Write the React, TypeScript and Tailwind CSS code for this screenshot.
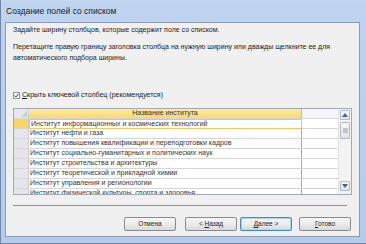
import React from 'react';

const rows = [
  'Институт информационных и космических технологий',
  'Институт нефти и газа',
  'Институт повышения квалификации и переподготовки кадров',
  'Институт социально-гуманитарных и политических наук',
  'Институт строительства и архитектуры',
  'Институт теоретической и прикладной химии',
  'Институт управления и регионологии',
  'Институт физической культуры, спорта и здоровья',
];

const Btn: React.FC<{ children: React.ReactNode; active?: boolean }> = ({ children, active }) => (
  <div
    className={`w-[52px] h-[14px] flex items-center justify-center rounded-[2px] border text-[6.5px] text-[#222] bg-gradient-to-b from-[#f6f6f6] via-[#ececec] to-[#d9d9d9] ${
      active ? 'border-[#3c8bd0] shadow-[inset_0_0_0_1px_#a9d6f5]' : 'border-[#8a8a8a]'
    }`}
  >
    <span className="whitespace-pre">{children}</span>
  </div>
);

const ScrollBtn: React.FC<{ up?: boolean }> = ({ up }) => (
  <div className="h-[10px] mx-px border border-[#b5b9c0] rounded-[1px] bg-gradient-to-b from-[#f7f7f7] to-[#e2e3e6] flex items-center justify-center">
    <svg width="6" height="4" viewBox="0 0 6 4">
      <path d={up ? 'M0 4 L3 0 L6 4 Z' : 'M0 0 L3 4 L6 0 Z'} fill="#4d6185" />
    </svg>
  </div>
);

export default function App() {
  return (
    <div className="w-[366px] h-[244px] flex flex-col bg-gradient-to-b from-[#bfd4f0] to-[#b4cbea] font-['Liberation_Sans',sans-serif] overflow-hidden border-l border-b border-[#6f86a8]">
      <div className="h-[22px] shrink-0 flex items-center pl-[5px] text-[8.5px] text-[#1b1b1b] border-t border-[#c3d7f0]">
        Создание полей со списком
      </div>
      <div className="flex-1 ml-[4px] mr-[6px] mb-[6px] border border-[#8d9cb3] bg-[#f0f0f0] flex flex-col px-[7px] text-[7px] text-[#1a1a1a]">
        <div className="mt-[1px] leading-[11px]">Задайте ширину столбцов, которые содержит поле со списком.</div>
        <div className="mt-[6px] leading-[11px]">
          Перетащите правую границу заголовка столбца на нужную ширину или дважды щелкните ее для
          <br />
          автоматического подбора ширины.
        </div>
        <div className="mt-[27px] h-[11px] flex items-center gap-[2px]">
          <div className="w-[7px] h-[7px] border border-[#8f8f8f] bg-white flex items-center justify-center">
            <svg width="5" height="5" viewBox="0 0 5 5">
              <path d="M0.5 2.5 L2 4 L4.5 0.8" stroke="#2a3f6e" strokeWidth="1" fill="none" />
            </svg>
          </div>
          <span>
            <span className="underline">С</span>крыть ключевой столбец (рекомендуется)
          </span>
        </div>
        <div className="mt-[7px] h-[87px] border border-[#a3a9b2] bg-white flex overflow-hidden">
          <div className="flex-1 flex flex-col">
            <div className="h-[10px] shrink-0 flex border-b border-[#d6d6d6]">
              <div className="w-[15px] bg-[#e6e9ee] border-r border-[#c8ccd2] relative">
                <svg className="absolute right-[1px] bottom-[1px]" width="6" height="6" viewBox="0 0 6 6">
                  <path d="M6 0 L6 6 L0 6 Z" fill="#c9ced6" />
                </svg>
              </div>
              <div className="w-[273px] bg-gradient-to-b from-[#ffeaa3] to-[#fbd868] border-r border-[#c9b889] flex items-center justify-center text-[#333]">
                Название института
              </div>
              <div className="flex-1 bg-[#f4f6fc]" />
            </div>
            {rows.map((r, i) => (
              <div key={r} className="h-[10px] shrink-0 flex border-b border-[#d6d6d6]">
                <div className={`w-[15px] border-r border-[#c8ccd2] ${i === 0 ? 'bg-[#fbd561]' : 'bg-[#e4e6ea]'}`} />
                <div
                  className={`w-[273px] flex items-center pl-px whitespace-nowrap overflow-hidden text-[#333] ${
                    i === 0 ? 'border border-[#f1c75c] -mb-px' : 'border-r border-[#a9a9a9]'
                  }`}
                >
                  {r}
                </div>
                <div className="flex-1 bg-white" />
              </div>
            ))}
          </div>
          <div className="w-[13px] shrink-0 bg-[#f3f3f4] border-l border-[#e1e1e1] flex flex-col pt-px pb-[3px]">
            <ScrollBtn up />
            <div className="mt-[2px] h-[17px] mx-px border border-[#b5b9c0] rounded-[1px] bg-gradient-to-b from-[#f6f6f6] to-[#e3e4e7] flex items-center justify-center">
              <div className="w-[5px] h-[5px] bg-[#c1c4ca]" />
            </div>
            <div className="flex-1" />
            <ScrollBtn />
          </div>
        </div>
        <div className="mt-[10px] h-px bg-[#8f8f8f] mr-[5px]" />
        <div className="mt-[11px] flex justify-end pr-px">
          <Btn>Отмена</Btn>
          <div className="w-[9px]" />
          <Btn>
            {'< '}
            <span className="underline">Н</span>азад
          </Btn>
          <div className="w-[3px]" />
          <Btn active>
            <span className="underline">Д</span>
            {'алее >'}
          </Btn>
          <div className="w-[7px]" />
          <Btn>
            <span className="underline">Г</span>отово
          </Btn>
        </div>
      </div>
    </div>
  );
}
